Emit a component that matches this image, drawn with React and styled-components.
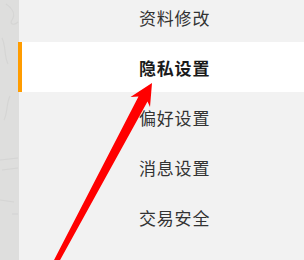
import React from "react";
import styled, { createGlobalStyle } from "styled-components";

const Global = createGlobalStyle`
  html, body { margin: 0; padding: 0; }
  body { width: 304px; height: 260px; overflow: hidden; background: #f2f2f2; }
  #root { width: 304px; height: 260px; }
`;

const Page = styled.div`
  position: relative;
  display: flex;
  width: 304px;
  height: 260px;
  overflow: hidden;
  font-family: "Noto Sans CJK SC", "Microsoft YaHei", sans-serif;
`;

const SideStrip = styled.div`
  position: relative;
  flex: 0 0 19px;
  height: 100%;
  background: #dededd;
  overflow: hidden;
`;

const Sketch = styled.svg`
  display: block;
  width: 19px;
  height: 260px;
`;

const Panel = styled.div`
  flex: 1;
  background: #f2f2f2;
`;

const Menu = styled.ul`
  list-style: none;
  margin: -8px 0 0;
  padding: 0;
  display: flex;
  flex-direction: column;
`;

const Item = styled.li`
  position: relative;
  height: 50px;
  display: flex;
  align-items: center;
  padding-left: 117px;
  font-size: 17px;
  letter-spacing: 0.8px;
  color: ${(p) => (p.$active ? "#1a1a1a" : "#333333")};
  font-weight: ${(p) => (p.$active ? 700 : 400)};
  background: ${(p) => (p.$active ? "#ffffff" : "transparent")};
  border-left: 4px solid ${(p) => (p.$active ? "#ff9c00" : "transparent")};
  margin-left: -1px;
`;

const ArrowLayer = styled.svg`
  position: absolute;
  left: 0;
  top: 0;
  width: 304px;
  height: 260px;
  pointer-events: none;
`;

const items = ["资料修改", "隐私设置", "偏好设置", "消息设置", "交易安全"];

export default function App() {
  return (
    <>
      <Global />
      <Page>
        <SideStrip>
          <Sketch viewBox="0 0 19 260">
            <g fill="none" stroke="#cdcdcc" strokeWidth="1.1" opacity="0.5">
              <path d="M6 4 C 12 8, 16 14, 12 20 C 9 24, 14 26, 18 22" />
              <path d="M2 38 C 6 46, 4 56, 8 64" />
              <path d="M10 96 C 6 104, 8 112, 4 120" />
              <path d="M0 160 L 18 158" />
              <path d="M2 170 L 18 168" />
              <path d="M0 200 L 14 202" />
              <path d="M12 214 L 18 214" />
            </g>
          </Sketch>
        </SideStrip>
        <Panel>
          <Menu>
            {items.map((t, i) => (
              <Item key={t} $active={i === 1}>
                {t}
              </Item>
            ))}
          </Menu>
        </Panel>
        <ArrowLayer viewBox="0 0 304 260">
          <polygon
            fill="#ff0000"
            points="152,83 150,107 147.5,101.5 59,262 53.5,261 138.5,96.5 130.5,97"
          />
        </ArrowLayer>
      </Page>
    </>
  );
}
